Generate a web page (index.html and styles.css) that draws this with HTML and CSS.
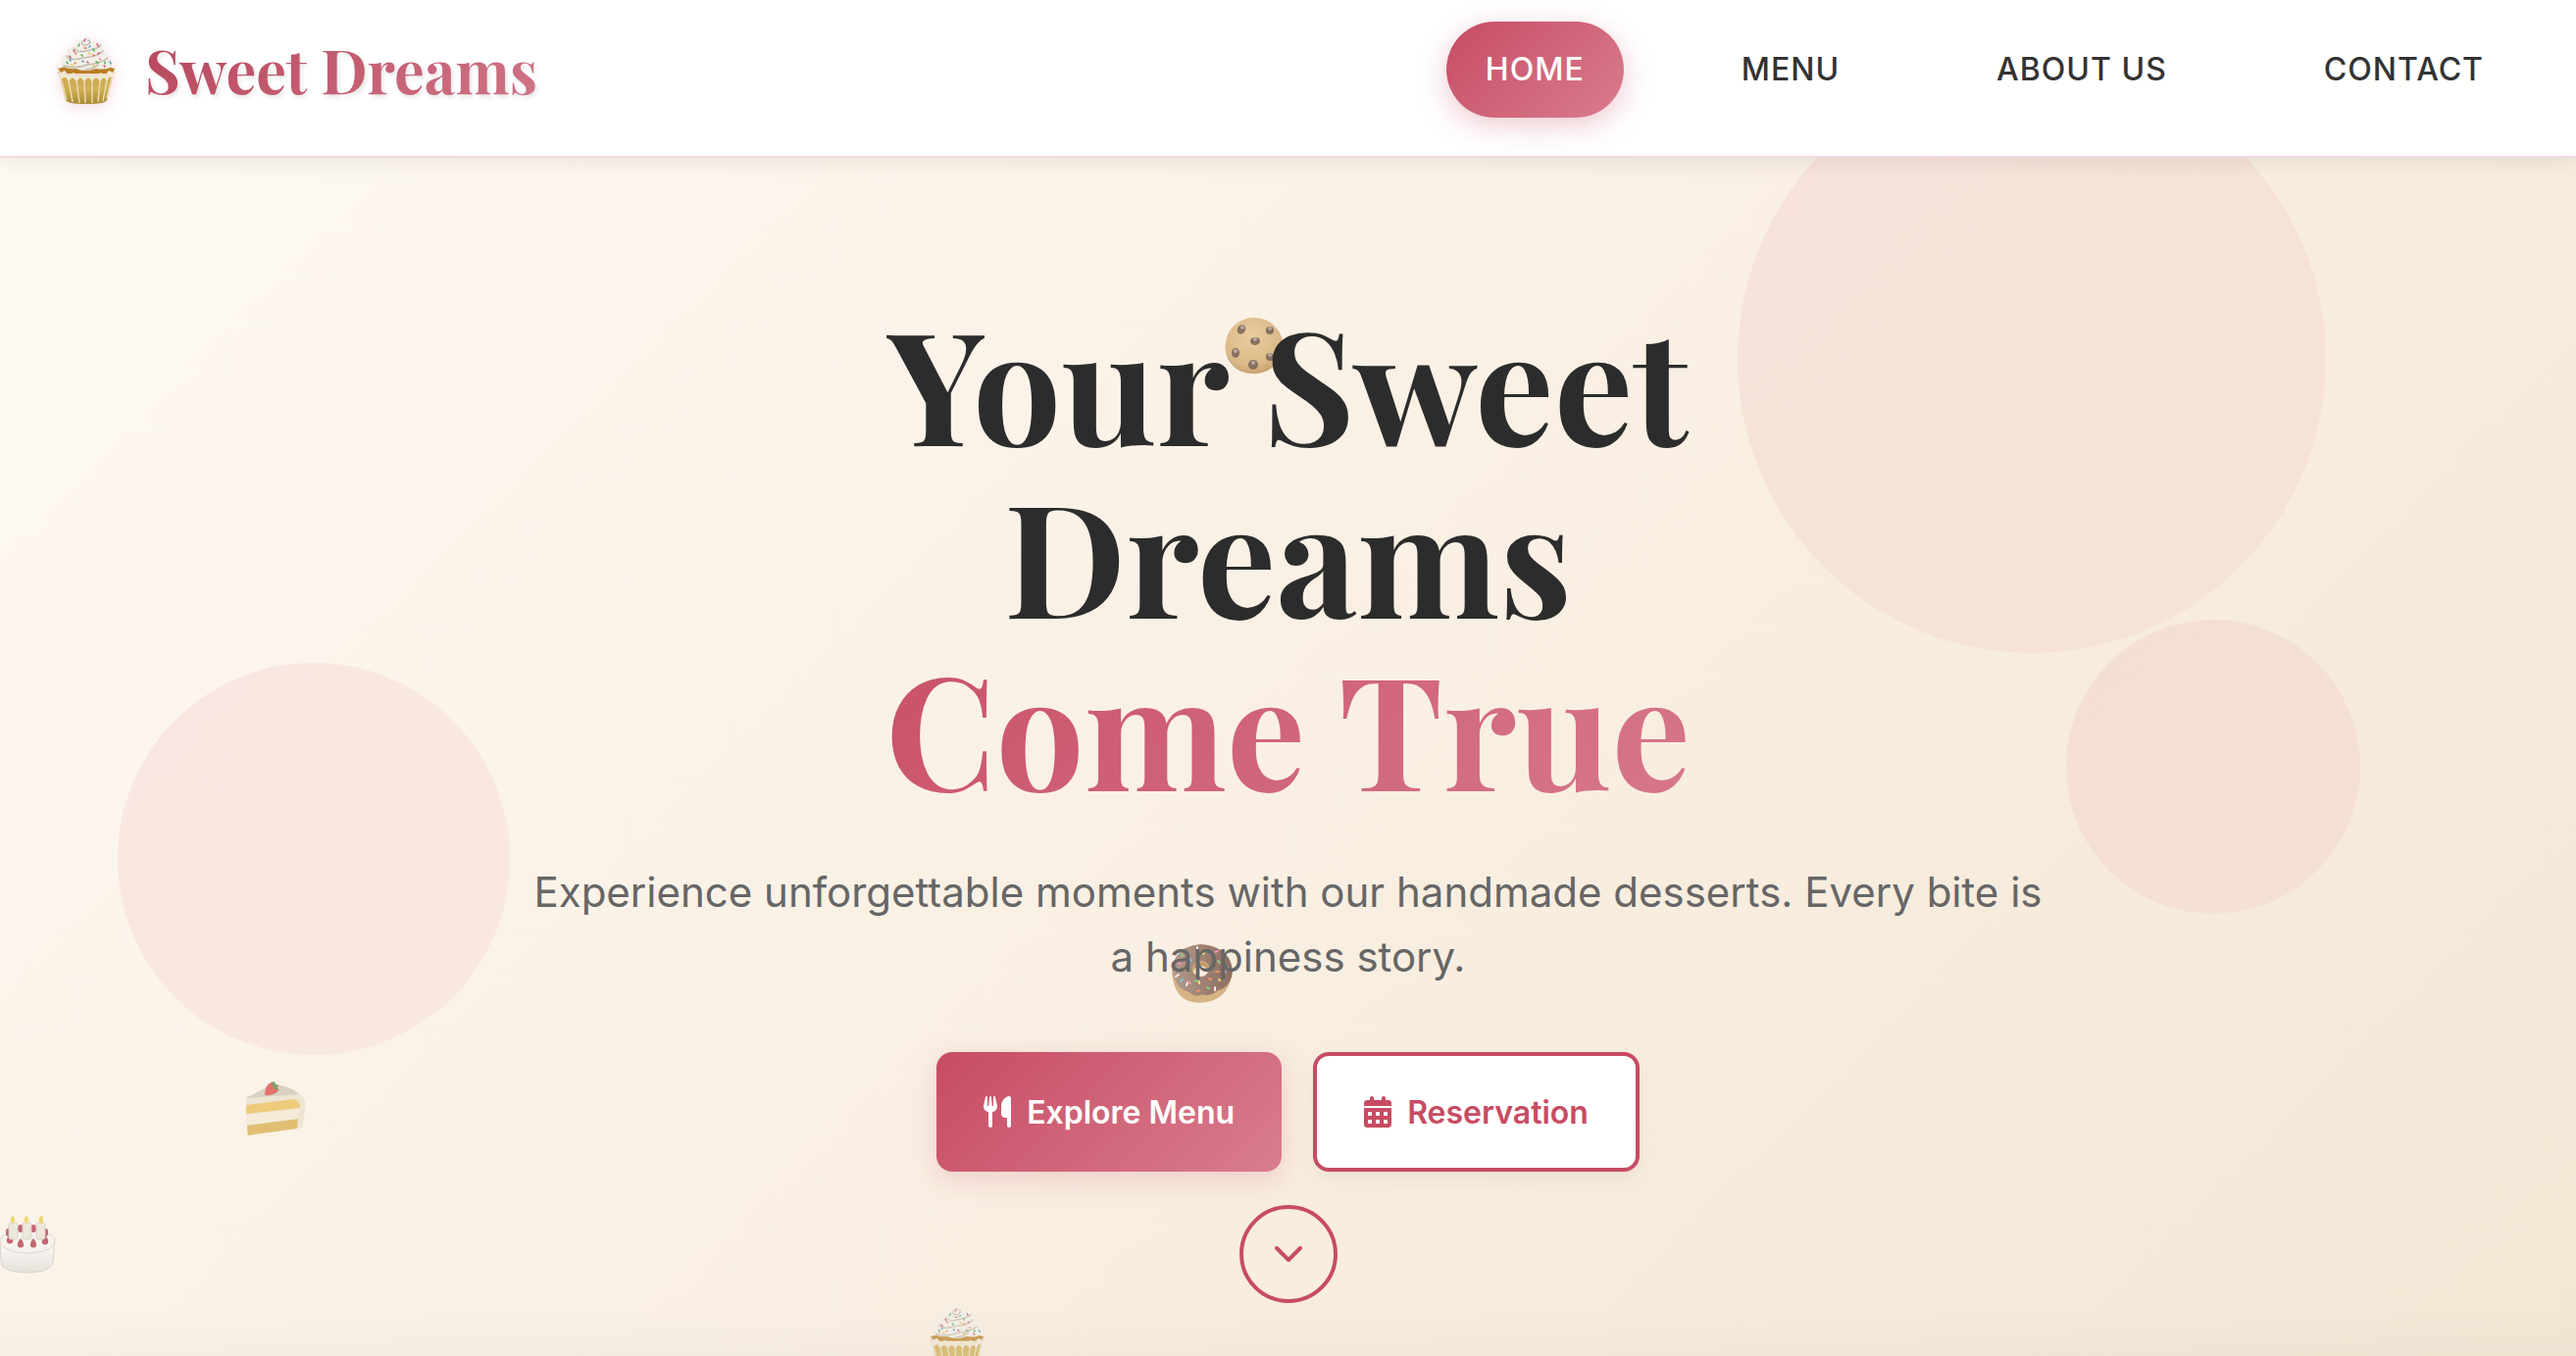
FILE: index.html
```html
<!DOCTYPE html>
<html lang="en">
<head>
  <meta charset="UTF-8">
  <meta name="viewport" content="width=device-width, initial-scale=1.0">
  <title>Sweet Dreams</title>
  <link rel="stylesheet" href="styles.css">
</head>

<body>
<svg class="sprite" aria-hidden="true">
  <defs>
    <linearGradient id="wrapper_fill" x1="0" y1="0" x2="0" y2="1">
      <stop offset="0" stop-color="#cda552" />
      <stop offset="0.6" stop-color="#d2b054" />
      <stop offset="1" stop-color="#a88a35" />
    </linearGradient>
    <linearGradient id="cake_side" x1="0" y1="0" x2="0" y2="1">
      <stop offset="0" stop-color="#ffffff" />
      <stop offset="1" stop-color="#dddad6" />
    </linearGradient>
    <radialGradient id="cookie_fill" cx="0.45" cy="0.35" r="0.7">
      <stop offset="0" stop-color="#e3bf80" />
      <stop offset="0.7" stop-color="#cfa261" />
      <stop offset="1" stop-color="#ab7837" />
    </radialGradient>
    <linearGradient id="choco_fill" x1="0" y1="0" x2="1" y2="0">
      <stop offset="0" stop-color="#96786a" />
      <stop offset="0.5" stop-color="#7a5545" />
      <stop offset="1" stop-color="#5c3828" />
    </linearGradient>
  </defs>

  <symbol id="cupcake" viewBox="0 0 60 70">
    <path d="M1 34 Q30 26 59 34 L59 39 H1 Z" fill="#b97d22" />
    <path d="M0 32 L4 38 L8 36 L12 41 L17 38 L22 42 L27 39 L31 42 L36 39 L40 42 L45 38 L49 41 L53 36 L57 38 L60 32 L51 66 Q50 70 30 70 Q10 70 9 66 Z" fill="url(#wrapper_fill)" />
    <path d="M0 32 L4 38 L8 36 L12 41 L17 38 L22 42 L27 39 L31 42 L36 39 L40 42 L45 38 L49 41 L53 36 L57 38 L60 32 L57 46 Q54 38 51 48 Q48 39 44 48 Q40 39 36 48 Q32 39 28 48 Q24 39 20 48 Q16 39 12 48 Q8 38 4 47 Z" fill="#efe8d5" />
    <path d="M4 44 L10 66 M12 46 L16 68 M20 46 L23 69 M28 46 L29 69 M36 46 L36 69 M44 46 L42 68 M51 46 L47 67 M56 44 L51 64" fill="none" stroke="#e9ddb4" stroke-width="1.4" />
    <path d="M5 29 Q3 22 10 20 Q9 13 18 12 Q18 6 25 5 Q29 4 30 0 Q35 3 33 6 Q47 6 46 15 Q52 17 51 22 Q58 24 57 30 Q54 36 40 34 Q30 38 19 34 Q7 35 5 29 Z" fill="#f1eee8" />
    <g fill="none" stroke="#c2bbae" stroke-width="1.4" stroke-linecap="round">
      <path d="M26 6 Q24 11 31 10 Q36 7 32 5" />
      <path d="M18 13 Q20 18 29 16 Q42 14 45 10" />
      <path d="M10 21 Q14 27 26 23 Q42 22 47 16" />
      <path d="M7 31 Q18 35 31 30 Q45 29 52 23" />
      <path d="M29 35 Q38 34 42 30" />
    </g>
    <g stroke-width="1.4" stroke-linecap="round">
      <path d="M29 4 l-1 2 M41 9 l1 2 M17 15 l1 2 M43 18 l-1 1 M13 21 l1 2 M48 31 l1 1 M31 27 l1 1" stroke="#cf3f6c" />
      <path d="M23 9 l-1 2 M37 14 l1 2 M25 20 l1 1 M40 27 l2 1 M49 27 l0 2 M10 27 l1 2" stroke="#45a850" />
      <path d="M28 13 l2 0 M20 18 l-1 1 M37 20 l1 1 M44 24 l0 1 M19 28 l-1 1" stroke="#e0743b" />
      <path d="M34 11 l-1 1 M13 25 l1 1 M54 27 l1 2 M26 26 l1 1" stroke="#3a97bd" />
      <path d="M15 30 l1 1 M37 31 l1 0 M33 18 l1 1" stroke="#e2bc3c" />
    </g>
  </symbol>

  <symbol id="cookie" viewBox="0 0 60 58">
    <path d="M30 0 Q44 0 52 10 Q60 18 59 31 Q58 45 47 52 Q38 58 27 57 Q12 56 5 45 Q-1 36 1 25 Q3 12 13 5 Q21 0 30 0 Z" fill="url(#cookie_fill)" />
    <g fill="#543828">
      <ellipse cx="17" cy="12" rx="4" ry="5" transform="rotate(30 17 12)" />
      <ellipse cx="46" cy="13" rx="4" ry="4" />
      <ellipse cx="31" cy="24" rx="5" ry="4" />
      <ellipse cx="11" cy="36" rx="4" ry="5" />
      <ellipse cx="46" cy="40" rx="4" ry="4" />
      <ellipse cx="29" cy="48" rx="5" ry="5" />
    </g>
    <g fill="#a08b7e">
      <circle cx="18" cy="10" r="2" />
      <circle cx="46" cy="11" r="2" />
      <circle cx="31" cy="22" r="2" />
      <circle cx="11" cy="34" r="2" />
      <circle cx="46" cy="38" r="2" />
      <circle cx="29" cy="46" r="2" />
    </g>
  </symbol>

  <symbol id="donut" viewBox="0 0 64 60">
    <path d="M1 26 Q2 48 14 56 Q28 63 44 57 Q60 50 63 28 Z" fill="#c79a5c" />
    <path fill-rule="evenodd" d="M30 0 Q50 1 59 14 Q66 27 60 38 Q55 46 48 47 Q40 54 32 51 Q25 55 19 49 Q9 47 4 36 Q-2 24 6 12 Q14 1 30 0 Z M31 17 Q22 18 22 26 Q23 33 31 33 Q39 32 39 25 Q39 18 31 17 Z" fill="url(#choco_fill)" />
    <path d="M31 17 Q22 18 22 26 Q23 33 31 33 Q39 32 39 25 Q39 18 31 17 Z" fill="#b67b3c" />
    <path d="M31 22 Q24 23 23 28 Q25 33 31 33 Q37 32 38 27 Q36 23 31 22 Z" fill="#fbf0e2" />
    <g stroke-width="2" stroke-linecap="round">
      <path d="M27 3 l0 2 M5 33 l3 -2 M17 39 l-1 3 M45 44 l0 3" stroke="#f4efea" />
      <path d="M12 12 l-1 -2 M48 17 l2 2 M27 38 l-2 -1 M37 44 l2 1" stroke="#5cc255" />
      <path d="M45 8 l3 -1 M10 20 l-2 -1 M18 38 l2 2 M54 28 l2 0" stroke="#e36d9c" />
      <path d="M19 15 l2 2 M12 36 l-2 2 M57 24 l2 1" stroke="#4ba6cf" />
      <path d="M34 9 l-1 1 M29 38 l0 2 M49 36 l1 1" stroke="#efd34d" />
      <path d="M46 28 l3 0 M27 48 l2 -1 M41 36 l-2 -1" stroke="#ea6a3c" />
    </g>
  </symbol>

  <symbol id="shortcake" viewBox="0 0 62 56">
    <path d="M1 17 L27 3 Q50 5 59 16 Q62 20 61 28 L59 46 L54 48 L2 55 Z" fill="#e8e0c9" />
    <path d="M1 17 L27 3 Q46 4 55 13 Z" fill="#cbc3b2" />
    <path d="M1 24 L50 18 Q56 20 56 27 L1 33 Z" fill="#e8bb4c" />
    <path d="M2 45 L54 38 L53 48 L3 55 Z" fill="#d7a841" />
    <path d="M1 34 L55 28 L54 38 L2 44 Z" fill="#f3e9d3" />
    <path d="M20 14 Q20 3 27 1 Q34 3 34 9 Q30 15 20 14 Z" fill="#dc3c35" />
    <path d="M26 1 L30 0 L31 3 L35 4 L32 6 L35 9 L30 8 Z" fill="#4d7d3a" />
  </symbol>

  <symbol id="birthday" viewBox="0 0 58 60">
    <path d="M1 28 Q2 49 3 52 Q10 59 29 59 Q48 59 54 51 Q56 48 56 28 Z" fill="url(#cake_side)" stroke="#c9c5be" />
    <ellipse cx="29" cy="27" rx="28" ry="12" fill="#f5f3f0" stroke="#cfcac2" />
    <g fill="#ae2840">
      <ellipse cx="9" cy="18" rx="2" ry="4" />
      <ellipse cx="22" cy="14" rx="3" ry="4" />
      <ellipse cx="35" cy="14" rx="3" ry="4" />
      <ellipse cx="48" cy="18" rx="2" ry="4" />
      <path d="M11 20 q4 4 3 8 q-3 3 -6 0 q-1 -4 3 -8 Z" />
      <path d="M22 24 q4 4 3 8 q-3 3 -6 0 q-1 -4 3 -8 Z" />
      <path d="M35 24 q4 4 3 8 q-3 3 -6 0 q-1 -4 3 -8 Z" />
      <path d="M47 21 q4 4 3 8 q-3 3 -6 0 q-1 -4 3 -8 Z" />
    </g>
    <g fill="#e6e2d6" stroke="#c6c1b2" stroke-width="0.8">
      <rect x="10" y="8" width="9" height="17" rx="2" />
      <rect x="24" y="8" width="9" height="17" rx="2" />
      <rect x="38" y="8" width="9" height="17" rx="2" />
    </g>
    <g fill="#e6cf3d">
      <path d="M14 0 q3 5 2 7 q-2 3 -4 0 q-1 -3 2 -7 Z" />
      <path d="M28 0 q3 5 2 7 q-2 3 -4 0 q-1 -3 2 -7 Z" />
      <path d="M43 0 q3 5 2 7 q-2 3 -4 0 q-1 -3 2 -7 Z" />
    </g>
  </symbol>
</svg>

<header class="navbar">
  <a href="#home" class="logo">
    <svg class="logo-icon" aria-hidden="true"><use href="#cupcake" /></svg>
    <span class="logo-text">Sweet Dreams</span>
  </a>
  <nav>
    <ul class="nav-menu">
      <li><a href="#home" class="nav-link active">Home</a></li>
      <li><a href="#menu" class="nav-link">Menu</a></li>
      <li><a href="#about" class="nav-link">About Us</a></li>
      <li><a href="#contact" class="nav-link">Contact</a></li>
    </ul>
  </nav>
</header>

<main class="hero" id="home">
  <div class="shape shape-1"></div>
  <div class="shape shape-2"></div>
  <div class="shape shape-3"></div>

  <svg class="floating float-cookie" aria-hidden="true"><use href="#cookie" /></svg>
  <svg class="floating float-donut" aria-hidden="true"><use href="#donut" /></svg>
  <svg class="floating float-shortcake" aria-hidden="true"><use href="#shortcake" /></svg>
  <svg class="floating float-birthday" aria-hidden="true"><use href="#birthday" /></svg>
  <svg class="floating float-cupcake" aria-hidden="true"><use href="#cupcake" /></svg>

  <div class="hero-content">
    <h1 class="hero-title">Your Sweet Dreams <span class="highlight">Come True</span></h1>
    <p class="hero-text">Experience unforgettable moments with our handmade desserts. Every bite is a happiness story.</p>
    <div class="hero-buttons">
      <button type="button" class="btn btn-primary">
        <svg class="btn-icon" viewBox="0 0 448 512" aria-hidden="true"><path d="M416 0C400 0 288 32 288 176V288c0 35.300 28.700 64 64 64h32V480c0 17.700 14.300 32 32 32s32-14.300 32-32V352 240 32c0-17.700-14.300-32-32-32zM64 16C64 7.800 57.900 1 49.700 .1S34.200 4.600 32.400 12.500L2.100 148.800C.7 155.100 0 161.500 0 167.900c0 45.900 35.100 83.600 80 87.700V480c0 17.700 14.300 32 32 32s32-14.300 32-32V255.600c44.900-4.100 80-41.800 80-87.700c0-6.400-.7-12.800-2.100-19.100L191.600 12.500c-1.800-8-9.300-13.300-17.400-12.400S160 7.800 160 16V150.200c0 5.400-4.400 9.800-9.800 9.800c-5.100 0-9.300-3.900-9.800-9L127.900 14.600C127.200 6.300 120.300 0 112 0s-15.200 6.300-15.900 14.600L83.700 151c-.5 5.100-4.700 9-9.800 9c-5.400 0-9.800-4.400-9.800-9.800V16z" /></svg>
        Explore Menu
      </button>
      <button type="button" class="btn btn-secondary">
        <svg class="btn-icon" viewBox="0 0 448 512" aria-hidden="true"><path fill-rule="evenodd" d="M128 0c17.700 0 32 14.300 32 32V64H288V32c0-17.700 14.300-32 32-32s32 14.300 32 32V64h48c26.500 0 48 21.500 48 48v48H0V112C0 85.500 21.500 64 48 64H96V32c0-17.700 14.300-32 32-32zM0 192H448V464c0 26.500-21.500 48-48 48H48c-26.500 0-48-21.500-48-48V192zm64 80v32c0 8.800 7.200 16 16 16h32c8.800 0 16-7.200 16-16V272c0-8.800-7.200-16-16-16H80c-8.800 0-16 7.200-16 16zm128 0v32c0 8.800 7.200 16 16 16h32c8.800 0 16-7.200 16-16V272c0-8.800-7.200-16-16-16H208c-8.800 0-16 7.200-16 16zm144-16c-8.800 0-16 7.200-16 16v32c0 8.800 7.200 16 16 16h32c8.800 0 16-7.200 16-16V272c0-8.800-7.200-16-16-16H336zM64 400v32c0 8.800 7.200 16 16 16h32c8.800 0 16-7.200 16-16V400c0-8.800-7.200-16-16-16H80c-8.800 0-16 7.200-16 16zm144-16c-8.800 0-16 7.200-16 16v32c0 8.800 7.200 16 16 16h32c8.800 0 16-7.200 16-16V400c0-8.800-7.200-16-16-16H208zm112 16v32c0 8.800 7.200 16 16 16h32c8.800 0 16-7.200 16-16V400c0-8.800-7.200-16-16-16H336c-8.800 0-16 7.200-16 16z" /></svg>
        Reservation
      </button>
    </div>
    <a href="#menu" class="scroll-arrow" aria-label="Scroll down">
      <svg viewBox="0 0 28 16" aria-hidden="true"><path d="M2 2 L14 14 L26 2" /></svg>
    </a>
  </div>
</main>
</body>
</html>
```
FILE: styles.css
```css
:root {
    --primary: #c74c63;
    --primary-light: #d97d8f;
    --dark: #2c2c2c;
    --gradient: linear-gradient(135deg, #c74c63 0%, #d97d8f 100%);
}

* {
    box-sizing: border-box;
    padding: 0;
    margin: 0;
}

body {
    display: flex;
    flex-direction: column;
    min-height: 100vh;
    font-family: 'Inter', sans-serif;
    color: var(--dark);
    background: linear-gradient(135deg, #fefaf5 0%, #faf1e5 45%, #f7ecdd 70%, #f4e6d5 100%);
}

.sprite {
    position: absolute;
    width: 0;
    height: 0;
}

/* Navbar */
.navbar {
    position: relative;
    z-index: 10;
    display: flex;
    align-items: center;
    justify-content: space-between;
    padding: 22px 54px 39px 58px;
    background: rgba(255, 255, 255, 0.97);
    border-bottom: 2px solid #f4d9df;
    box-shadow: 0 4px 20px rgba(0, 0, 0, 0.08);
}

.logo {
    display: flex;
    align-items: center;
    gap: 30px;
    text-decoration: none;
}

.logo-icon {
    width: 60px;
    height: 70px;
    filter: drop-shadow(0 4px 8px rgba(199, 76, 99, 0.2));
}

.logo-text {
    font-family: 'Playfair Display', 'Liberation Serif', serif;
    font-size: 61px;
    font-weight: 700;
    line-height: 72px;
    background: linear-gradient(135deg, #b8475c 0%, #cf7486 100%);
    -webkit-background-clip: text;
    background-clip: text;
    color: transparent;
    filter: drop-shadow(2px 3px 2px rgba(0, 0, 0, 0.1));
}

.nav-menu {
    display: flex;
    gap: 80px;
    list-style: none;
}

.nav-link {
    display: block;
    padding: 0 40px;
    border-radius: 50px;
    font-size: 32px;
    font-weight: 500;
    line-height: 98px;
    letter-spacing: 1px;
    text-transform: uppercase;
    text-decoration: none;
    color: #333333;
}

.nav-link.active {
    color: white;
    background: var(--gradient);
    box-shadow: 0 8px 30px rgba(199, 76, 99, 0.3);
}

/* Hero */
.hero {
    position: relative;
    flex: 1;
    display: flex;
    justify-content: center;
    padding: 140px 40px 50px;
    overflow: hidden;
}

.hero::after {
    content: "";
    position: absolute;
    left: 0;
    right: 0;
    bottom: 0;
    height: 50px;
    background: linear-gradient(rgba(0, 0, 0, 0), rgba(0, 0, 0, 0.02));
}

.shape {
    position: absolute;
    border-radius: 50%;
    background: linear-gradient(135deg, #dc7888 0%, #e8a8a8 100%);
    opacity: 0.12;
}

.shape-1 {
    top: -95px;
    right: 255px;
    width: 600px;
    height: 600px;
}

.shape-2 {
    top: 515px;
    left: 120px;
    width: 400px;
    height: 400px;
}

.shape-3 {
    top: 471px;
    right: 220px;
    width: 300px;
    height: 300px;
}

.floating {
    position: absolute;
    width: 60px;
    height: 60px;
    opacity: 0.7;
}

.float-cookie {
    top: 162px;
    left: 1249px;
}

.float-donut {
    top: 802px;
    left: 1194px;
    width: 64px;
}

.float-shortcake {
    top: 940px;
    left: 250px;
    width: 62px;
}

.float-birthday {
    top: 1078px;
    left: -2px;
}

.float-cupcake {
    top: 1170px;
    left: 948px;
    width: 56px;
    height: 66px;
}

.hero-content {
    position: relative;
    display: flex;
    flex-direction: column;
    align-items: center;
    max-width: 1560px;
    text-align: center;
}

.hero-title {
    max-width: 1100px;
    margin-bottom: 48px;
    font-family: 'Playfair Display', 'Liberation Serif', serif;
    font-size: 160px;
    font-weight: 700;
    line-height: 176px;
}

.highlight {
    display: block;
    background: var(--gradient);
    -webkit-background-clip: text;
    background-clip: text;
    color: transparent;
}

.hero-text {
    margin-bottom: 64px;
    font-size: 42px;
    line-height: 66px;
    color: #666666;
}

.hero-buttons {
    display: flex;
    gap: 32px;
    margin-bottom: 34px;
}

.btn {
    display: flex;
    align-items: center;
    gap: 16px;
    height: 122px;
    padding: 0 48px;
    border: 0;
    border-radius: 16px;
    font-family: inherit;
    font-size: 32px;
    font-weight: 600;
    cursor: pointer;
}

.btn-primary {
    color: white;
    background: var(--gradient);
    box-shadow: 0 8px 30px rgba(199, 76, 99, 0.2);
}

.btn-secondary {
    color: var(--primary);
    background: white;
    border: 4px solid var(--primary);
    box-shadow: 0 8px 20px rgba(0, 0, 0, 0.05);
}

.btn-icon {
    width: 28px;
    height: 32px;
    fill: currentColor;
}

.scroll-arrow {
    display: flex;
    align-items: center;
    justify-content: center;
    width: 100px;
    height: 100px;
    border: 4px solid var(--primary);
    border-radius: 50%;
}

.scroll-arrow svg {
    width: 28px;
    height: 16px;
    fill: none;
    stroke: var(--primary);
    stroke-width: 4;
    stroke-linecap: round;
    stroke-linejoin: round;
}
```
